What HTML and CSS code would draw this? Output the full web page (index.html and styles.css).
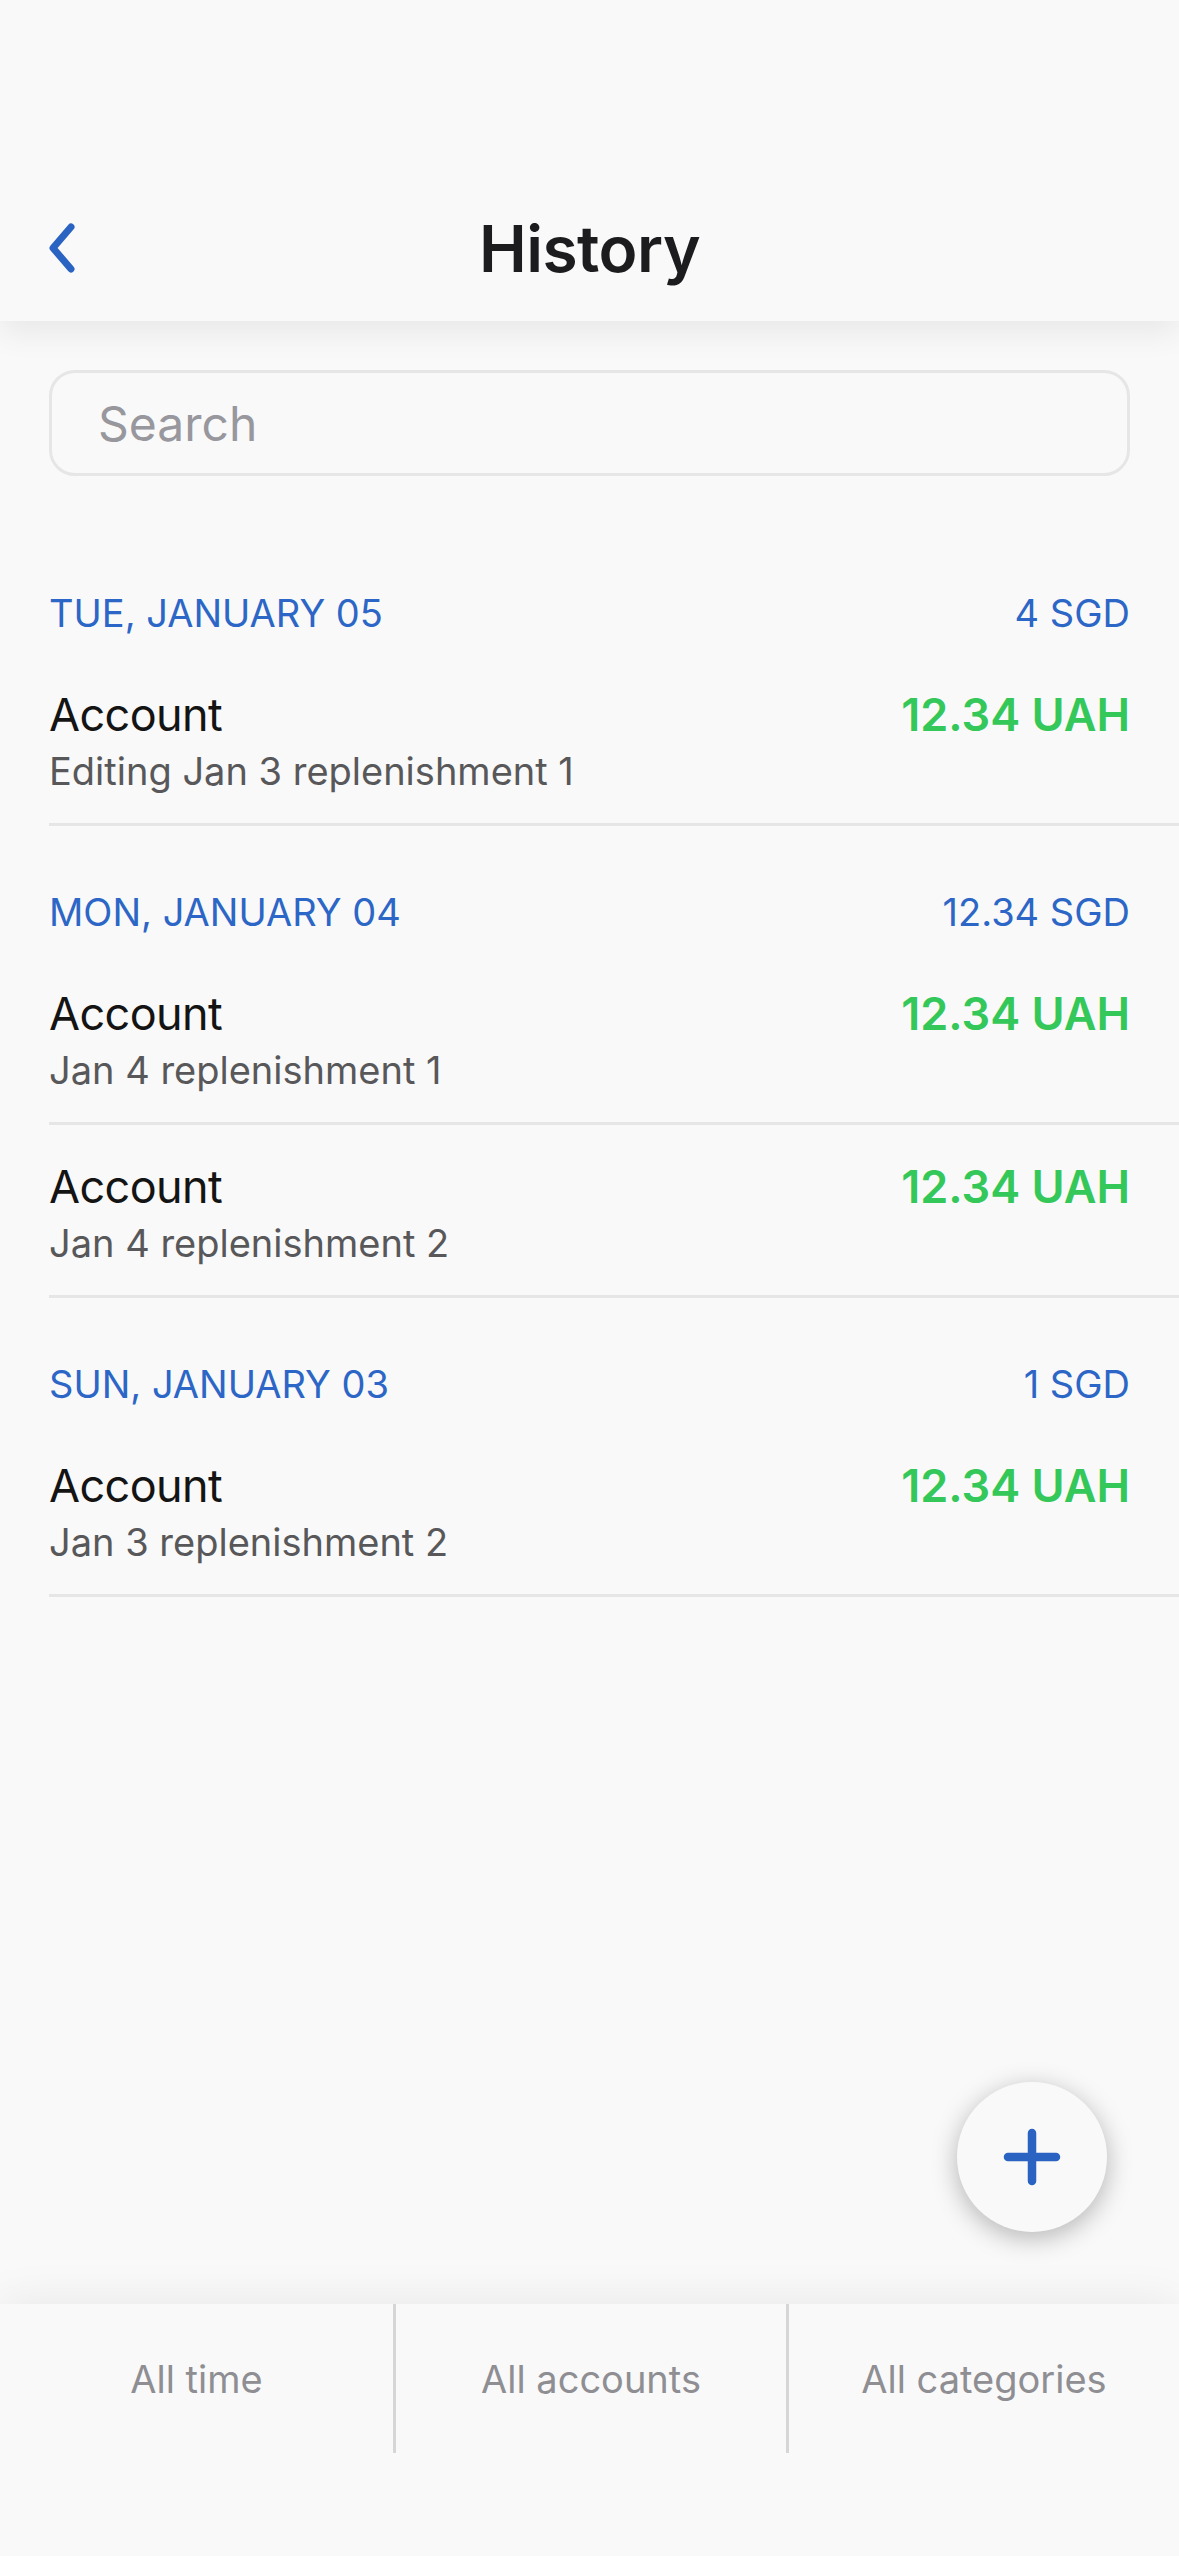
FILE: index.html
```html
<!DOCTYPE html>
<html lang="en">
<head>
<meta charset="utf-8">
<title>History</title>
<link rel="stylesheet" href="styles.css">
</head>
<body>
<div class="app">
  <header class="header">
    <div class="nav">
      <button class="back" aria-label="Back">
        <svg width="34" height="52" viewBox="0 0 34 52"><path d="M27 5 L9 26 L27 47" fill="none" stroke="#2a63c2" stroke-width="7" stroke-linecap="round" stroke-linejoin="round"/></svg>
      </button>
      <h1 class="title">History</h1>
    </div>
  </header>

  <main class="main">
    <div class="search-wrap">
      <div class="search">Search</div>
    </div>

    <section class="section">
      <div class="section-head"><span>TUE, JANUARY 05</span><span>4 SGD</span></div>
      <div class="row">
        <div class="row-top"><span class="acct">Account</span><span class="amount">12.34 UAH</span></div>
        <div class="note">Editing Jan 3 replenishment 1</div>
      </div>
    </section>

    <section class="section">
      <div class="section-head"><span>MON, JANUARY 04</span><span>12.34 SGD</span></div>
      <div class="row">
        <div class="row-top"><span class="acct">Account</span><span class="amount">12.34 UAH</span></div>
        <div class="note">Jan 4 replenishment 1</div>
      </div>
      <div class="row">
        <div class="row-top"><span class="acct">Account</span><span class="amount">12.34 UAH</span></div>
        <div class="note">Jan 4 replenishment 2</div>
      </div>
    </section>

    <section class="section">
      <div class="section-head"><span>SUN, JANUARY 03</span><span>1 SGD</span></div>
      <div class="row">
        <div class="row-top"><span class="acct">Account</span><span class="amount">12.34 UAH</span></div>
        <div class="note">Jan 3 replenishment 2</div>
      </div>
    </section>
  </main>

  <button class="fab" aria-label="Add">
    <svg width="60" height="60" viewBox="0 0 60 60"><path d="M30 6 V54 M6 30 H54" fill="none" stroke="#2a63c2" stroke-width="8.5" stroke-linecap="round"/></svg>
  </button>

  <footer class="footer">
    <nav class="filters">
      <div class="filter">All time</div>
      <div class="filter">All accounts</div>
      <div class="filter">All categories</div>
    </nav>
    <div class="safe"></div>
  </footer>
</div>
</body>
</html>
```

FILE: styles.css
```css
* { box-sizing: border-box; }
html, body {
  margin: 0;
  padding: 0;
  background: #f9f9f9;
}
body {
  font-family: "Inter", "Liberation Sans", sans-serif;
  width: 1179px;
  height: 2556px;
  overflow: hidden;
}
.app {
  position: relative;
  width: 1179px;
  height: 2556px;
  display: flex;
  flex-direction: column;
}
.header {
  height: 321px;
  background: #f9f9f9;
  display: flex;
  flex-direction: column;
  justify-content: flex-end;
  box-shadow: 0 12px 30px rgba(0, 0, 0, 0.07);
  position: relative;
  z-index: 2;
}
.nav {
  height: 146px;
  display: flex;
  align-items: center;
  justify-content: center;
  position: relative;
}
.back {
  position: absolute;
  left: 44px;
  top: 50%;
  transform: translateY(-50%);
  background: none;
  border: 0;
  padding: 0;
  display: flex;
}
.title {
  margin: 0;
  font-size: 64px;
  font-weight: 600;
  color: #1c1c1e;
  letter-spacing: -0.5px;
}
.main {
  flex: 1;
}
.search-wrap {
  padding: 49px 49px 0 49px;
}
.search {
  height: 106px;
  border: 3px solid #e6e6e6;
  border-radius: 26px;
  padding-left: 46px;
  display: flex;
  align-items: center;
  font-size: 48px;
  color: #97979d;
}
.section {
  margin-left: 49px;
  padding-top: 62px;
}
.section:first-of-type {
  padding-top: 113px;
}
.section-head {
  display: flex;
  justify-content: space-between;
  padding-right: 49px;
  height: 48px;
  line-height: 48px;
  margin-bottom: 16px;
  font-size: 38px;
  color: #2c66c6;
}
.row {
  padding: 35px 49px 28px 0;
  border-bottom: 3px solid #e6e6e6;
}
.row-top {
  display: flex;
  justify-content: space-between;
  height: 54px;
  line-height: 54px;
  font-size: 45px;
}
.acct {
  color: #141414;
  letter-spacing: -0.6px;
}
.amount {
  color: #34c759;
  font-weight: 600;
}
.note {
  margin-top: 5px;
  height: 48px;
  line-height: 48px;
  font-size: 38px;
  color: #58585a;
}
.fab {
  position: absolute;
  left: 957px;
  top: 2082px;
  width: 150px;
  height: 150px;
  border-radius: 50%;
  border: 0;
  padding: 0;
  background: #f9f9f9;
  box-shadow: 0 6px 26px rgba(0, 0, 0, 0.28);
  display: flex;
  align-items: center;
  justify-content: center;
  z-index: 3;
}
.footer {
  position: relative;
  z-index: 2;
}
.filters {
  height: 149px;
  display: grid;
  grid-template-columns: 1fr 1fr 1fr;
  background: #f9f9f9;
  box-shadow: 0 0 45px rgba(0, 0, 0, 0.08);
}
.filter {
  display: flex;
  align-items: center;
  justify-content: center;
  font-size: 38px;
  color: #8e8e93;
}
.filter + .filter {
  border-left: 3px solid #d6d6d6;
}
.safe {
  height: 103px;
  background: #f9f9f9;
  position: relative;
}
```
